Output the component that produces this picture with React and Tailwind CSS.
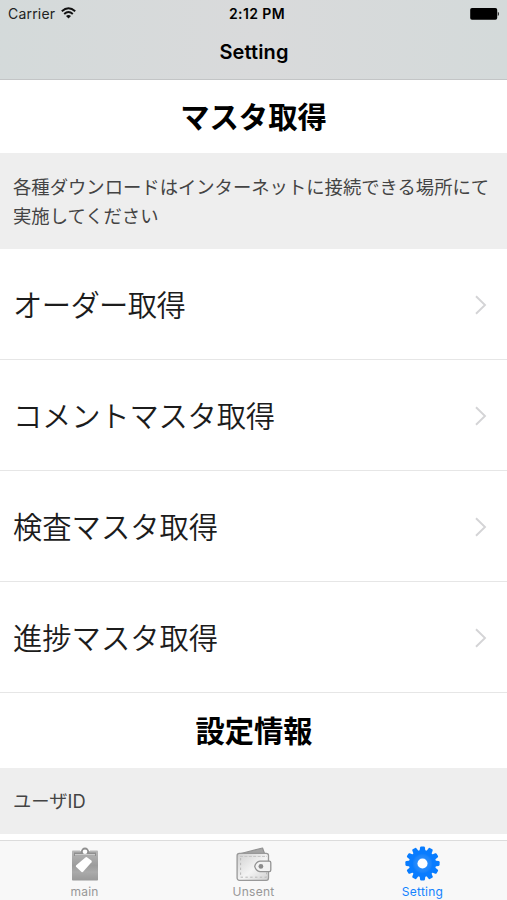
import React from "react";

const rows = [
  { label: "オーダー取得", spacing: "tracking-[-0.6px]" },
  { label: "コメントマスタ取得", spacing: "tracking-[-0.2px]" },
  { label: "検査マスタ取得", spacing: "tracking-normal" },
  { label: "進捗マスタ取得", spacing: "tracking-normal" },
];

const teeth = [0, 30, 60, 90, 120, 150, 180, 210, 240, 270, 300, 330];

function WifiIcon() {
  return (
    <svg className="w-[15px] h-[12px] mb-[2px]" viewBox="0 0 15 12" fill="none" stroke="#111" strokeWidth="1.9">
      <path d="M0.8 4.3 Q7.5 -1.7 14.2 4.3" />
      <path d="M3.2 7 Q7.5 3.2 11.8 7" />
      <path d="M7.5 11.4 L5 8.9 Q7.5 7 10 8.9 Z" fill="#111" stroke="none" />
    </svg>
  );
}

function BatteryIcon() {
  return (
    <svg className="w-[30px] h-[12px]" viewBox="0 0 30 12">
      <rect x="1.2" y="0" width="27" height="11.8" rx="1.8" fill="#000" />
      <path d="M28.8 3.8 Q30 4.3 30 5.9 Q30 7.5 28.8 8 Z" fill="#222" />
    </svg>
  );
}

function ClipboardIcon() {
  return (
    <svg className="w-[28px] h-[34px]" viewBox="0 0 28 34">
      <defs>
        <linearGradient id="board" x1="0" y1="0" x2="0" y2="1">
          <stop offset="0" stopColor="#b8b8b8" />
          <stop offset="0.5" stopColor="#9c9c9c" />
          <stop offset="0.72" stopColor="#aaa" />
          <stop offset="1" stopColor="#999" />
        </linearGradient>
      </defs>
      <rect x="1" y="3.5" width="26" height="30" rx="0.8" fill="url(#board)" />
      <path d="M9 3 L10.5 0 H17.5 L19 3 V4 H9 Z" fill="#f8f8f8" />
      <path d="M3 9 V5.4 H9.6 Q10.6 0.6 14 0.6 Q17.4 0.6 18.4 5.4 H25 V9 Z" fill="#8f8f8f" />
      <path d="M4 7.8 H24" stroke="#d8d8d8" strokeWidth="1.2" />
      <circle cx="14" cy="4.7" r="2.3" fill="#fff" />
      <path d="M14.4 10.4 Q15.1 9.8 15.9 10.3 L20.4 13.6 Q21.2 14.4 20.5 15.3 L12.1 24.8 Q11.4 25.5 10.6 24.9 L5 19.8 Q4.5 19.1 5.2 18.3 Z" fill="#fff" />
    </svg>
  );
}

function WalletIcon() {
  return (
    <svg className="w-[36px] h-[34px]" viewBox="0 0 36 34" fill="none">
      <defs>
        <linearGradient id="leather" x1="0" y1="0" x2="1" y2="1">
          <stop offset="0" stopColor="#cfcfcf" />
          <stop offset="0.55" stopColor="#f4f4f4" />
          <stop offset="1" stopColor="#d0d0d0" />
        </linearGradient>
      </defs>
      <path d="M5 6.5 L26.5 1 L28.5 6.5 Z" fill="#a5a5a5" stroke="#929292" strokeWidth="1.2" strokeLinejoin="round" />
      <rect x="1.1" y="6.4" width="31.4" height="26.9" rx="2.2" fill="url(#leather)" stroke="#999" strokeWidth="1.3" />
      <path d="M4 9.4 H31" stroke="#c2c2c2" strokeDasharray="3 1.4" />
      <path d="M4.6 11 V30.2 H30.5 V25.5" stroke="#b8b8b8" strokeDasharray="2.4 2.4" />
      <path d="M24 14.2 H33.2 Q34.8 14.2 34.8 15.8 V23.1 Q34.8 24.7 33.2 24.7 H24 Q20 24.1 18.7 19.4 Q20 14.8 24 14.2 Z" fill="#f3f3f3" stroke="#939393" strokeWidth="1.3" />
      <circle cx="24.9" cy="19.4" r="2.4" fill="#8c8c8c" />
    </svg>
  );
}

function GearIcon() {
  return (
    <svg className="w-[35px] h-[35px]" viewBox="0 0 36 36">
      <defs>
        <radialGradient id="gear">
          <stop offset="0.25" stopColor="#2b8fff" />
          <stop offset="0.6" stopColor="#1c85fb" />
          <stop offset="0.75" stopColor="#087cff" />
        </radialGradient>
      </defs>
      {teeth.map((angle) => (
        <path
          key={angle}
          d="M14.9 6 L15.5 1.5 Q15.7 0.4 16.6 0.4 H19.4 Q20.3 0.4 20.5 1.5 L21.1 6 Z"
          fill="#077cff"
          transform={`rotate(${angle} 18 18)`}
        />
      ))}
      <circle cx="18" cy="18" r="14" fill="url(#gear)" />
      <circle cx="18" cy="18" r="5.2" fill="#fff" />
    </svg>
  );
}

function Chevron() {
  return (
    <svg className="w-[12px] h-[20px] mt-[2px] shrink-0" viewBox="0 0 12 20" fill="none">
      <path d="M1 1.2 L10 10 L1 18.8" stroke="#d4d4d6" strokeWidth="1.9" />
    </svg>
  );
}

function TabItem({ label, active, children }) {
  return (
    <div className={`flex-1 flex flex-col items-center ${active ? "text-[#1483ff]" : "text-[#979797]"}`}>
      <div className="h-[44px] pt-px flex items-center justify-center">{children}</div>
      <span className="text-[12px] leading-[14px] tracking-[0.25px]">{label}</span>
    </div>
  );
}

function App() {
  return (
    <div className="w-[507px] h-[900px] flex flex-col overflow-hidden bg-white font-[Inter,'Noto_Sans_CJK_JP',sans-serif]">
      {/* Status bar and title */}
      <header className="h-[80px] shrink-0 bg-linear-to-r from-[#d4dada] via-[#d9dadb] to-[#d4dada] border-b border-[#c3c5c6]">
        <div className="h-[27px] px-2 grid grid-cols-3 items-center text-black">
          <div className="flex items-center gap-[6px]">
            <span className="text-[14px] tracking-[0.2px] text-[#222]">Carrier</span>
            <WifiIcon />
          </div>
          <span className="pl-[7px] text-center text-[14px] tracking-[0.4px] font-semibold">2:12 PM</span>
          <div className="flex justify-end">
            <BatteryIcon />
          </div>
        </div>
        <h1 className="pl-px text-center text-[20px] leading-[51px] tracking-[0.1px] font-semibold">Setting</h1>
      </header>

      {/* Settings list */}
      <main className="h-[760px] shrink-0 overflow-hidden">
        <h2 className="h-[73px] pt-[3px] flex items-center justify-center text-[29.3px] font-bold text-black">マスタ取得</h2>
        <p className="h-[96px] pt-[20px] pl-[13px] bg-[#eee] text-[18.33px] leading-[29px] text-[#444] whitespace-nowrap">
          各種ダウンロードはインターネットに接続できる場所にて
          <br />
          実施してください
        </p>
        <ul>
          {rows.map((row) => (
            <li
              key={row.label}
              className="h-[111px] pl-[13px] pr-[20px] flex items-center justify-between border-b border-[#e6e6e6]"
            >
              <span className={`pt-[3px] text-[29.3px] font-[350] text-[#1c1c1c] ${row.spacing}`}>{row.label}</span>
              <Chevron />
            </li>
          ))}
        </ul>
        <h2 className="h-[75px] pt-[3px] pl-px flex items-center justify-center text-[29.3px] font-bold text-black">設定情報</h2>
        <p className="h-[66px] pt-[2px] flex items-center pl-[13px] bg-[#eee] text-[18.3px] text-[#444]">ユーザID</p>
      </main>

      {/* Tab bar */}
      <nav className="h-[60px] shrink-0 flex border-t border-[#dcdcdc] bg-[#f8f8f8]">
        <TabItem label="main">
          <ClipboardIcon />
        </TabItem>
        <TabItem label="Unsent">
          <WalletIcon />
        </TabItem>
        <TabItem label="Setting" active>
          <GearIcon />
        </TabItem>
      </nav>
    </div>
  );
}

export default App;
